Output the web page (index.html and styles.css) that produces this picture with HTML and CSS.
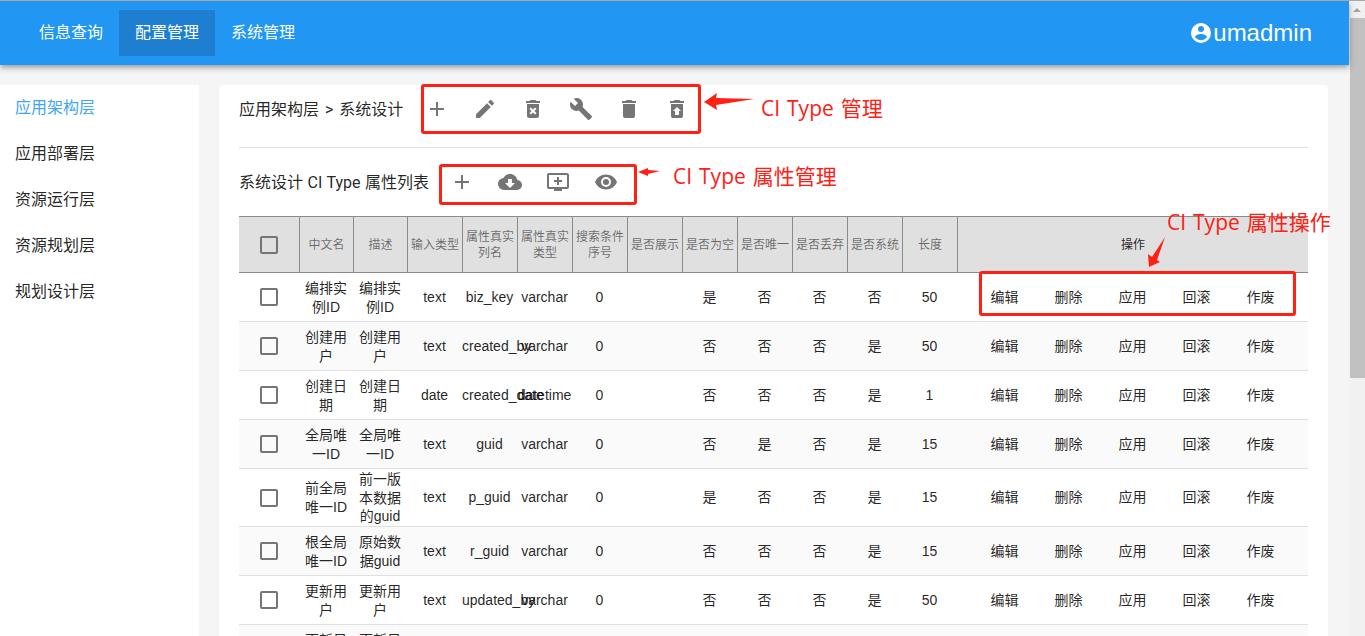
FILE: index.html
```html
<!DOCTYPE html>
<html lang="zh-CN">
<head>
<meta charset="utf-8">
<title>配置管理</title>
<link rel="stylesheet" href="styles.css">
</head>
<body>
<div class="app">
  <div class="page">
    <header class="topbar">
      <nav class="nav">
        <a class="nav-item">信息查询</a>
        <a class="nav-item nav-active">配置管理</a>
        <a class="nav-item">系统管理</a>
      </nav>
      <div class="user">
        <svg class="icon" viewBox="0 0 24 24"><path d="M12,19.2C9.5,19.2 7.29,17.92 6,16C6.03,14 10,12.9 12,12.9C14,12.9 17.97,14 18,16C16.71,17.92 14.5,19.2 12,19.2M12,5A3,3 0 0,1 15,8A3,3 0 0,1 12,11A3,3 0 0,1 9,8A3,3 0 0,1 12,5M12,2A10,10 0 0,0 2,12A10,10 0 0,0 12,22A10,10 0 0,0 22,12A10,10 0 0,0 12,2Z"/></svg>
        <span>umadmin</span>
      </div>
    </header>
    <div class="content">
      <aside class="sidebar">
        <a class="side-item side-active">应用架构层</a>
        <a class="side-item">应用部署层</a>
        <a class="side-item">资源运行层</a>
        <a class="side-item">资源规划层</a>
        <a class="side-item">规划设计层</a>
      </aside>
      <main class="card">
        <div class="toolbar toolbar-top">
          <span class="crumb crumb-top">应用架构层 &gt; 系统设计</span>
          <div class="icons icons-top">
            <button class="icon-btn"><svg class="icon" viewBox="0 0 24 24"><path d="M19,13H13V19H11V13H5V11H11V5H13V11H19V13Z"/></svg></button>
            <button class="icon-btn"><svg class="icon" viewBox="0 0 24 24"><path d="M20.71,7.04C21.1,6.65 21.1,6 20.71,5.63L18.37,3.29C18,2.9 17.35,2.9 16.96,3.29L15.12,5.12L18.87,8.87M3,17.25V21H6.75L17.81,9.93L14.06,6.18L3,17.25Z"/></svg></button>
            <button class="icon-btn"><svg class="icon" viewBox="0 0 24 24"><path d="M6,19A2,2 0 0,0 8,21H16A2,2 0 0,0 18,19V7H6V19M8.46,11.88L9.87,10.47L12,12.59L14.12,10.47L15.53,11.88L13.41,14L15.53,16.12L14.12,17.53L12,15.41L9.88,17.53L8.47,16.12L10.59,14L8.46,11.88M15.5,4L14.5,3H9.5L8.5,4H5V6H19V4H15.5Z"/></svg></button>
            <button class="icon-btn"><svg class="icon" viewBox="0 0 24 24"><path d="M22.7,19L13.6,9.9C14.5,7.6 14,4.9 12.1,3C10.1,1 7.1,0.6 4.7,1.7L9,6L6,9L1.6,4.7C0.4,7.1 0.9,10.1 2.9,12.1C4.8,14 7.5,14.5 9.8,13.6L18.9,22.7C19.3,23.1 19.9,23.1 20.3,22.7L22.6,20.4C23.1,20 23.1,19.3 22.7,19Z"/></svg></button>
            <button class="icon-btn"><svg class="icon" viewBox="0 0 24 24"><path d="M19,4H15.5L14.5,3H9.5L8.5,4H5V6H19V4H15.5ZM6,19A2,2 0 0,0 8,21H16A2,2 0 0,0 18,19V7H6V19Z"/></svg></button>
            <button class="icon-btn"><svg class="icon" viewBox="0 0 24 24"><path d="M14,14H16L12,10L8,14H10V18H14V14M6,7H18V19C18,19.5 17.8,20 17.39,20.39C17,20.8 16.5,21 16,21H8C7.5,21 7,20.8 6.61,20.39C6.2,20 6,19.5 6,19V7M19,4V6H5V4H8.5L9.5,3H14.5L15.5,4H19Z"/></svg></button>
          </div>
        </div>
        <div class="toolbar toolbar-sub">
          <span class="crumb crumb-sub">系统设计 CI Type 属性列表</span>
          <div class="icons icons-sub">
            <button class="icon-btn"><svg class="icon" viewBox="0 0 24 24"><path d="M19,13H13V19H11V13H5V11H11V5H13V11H19V13Z"/></svg></button>
            <button class="icon-btn"><svg class="icon" viewBox="0 0 24 24"><path d="M17,13L12,18L7,13H10V9H14V13M19.35,10.03C18.67,6.59 15.64,4 12,4C9.11,4 6.6,5.64 5.35,8.03C2.34,8.36 0,10.9 0,14A6,6 0 0,0 6,20H19A5,5 0 0,0 24,15C24,12.36 21.95,10.22 19.35,10.03Z"/></svg></button>
            <button class="icon-btn"><svg class="icon" viewBox="0 0 24 24"><path d="M21 3H3c-1.11 0-2 .89-2 2v12c0 1.1.89 2 2 2h5v2h8v-2h5c1.1 0 1.99-.9 1.99-2L23 5c0-1.11-.9-2-2-2zm0 14H3V5h18v12zm-5-7v2h-3v3h-2v-3H8v-2h3V7h2v3h3z"/></svg></button>
            <button class="icon-btn"><svg class="icon" viewBox="0 0 24 24"><path d="M12,9A3,3 0 0,0 9,12A3,3 0 0,0 12,15A3,3 0 0,0 15,12A3,3 0 0,0 12,9M12,17A5,5 0 0,1 7,12A5,5 0 0,1 12,7A5,5 0 0,1 17,12A5,5 0 0,1 12,17M12,4.5C7,4.5 2.73,7.61 1,12C2.73,16.39 7,19.5 12,19.5C17,19.5 21.27,16.39 23,12C21.27,7.61 17,4.5 12,4.5Z"/></svg></button>
          </div>
        </div>
        <table class="grid">
          <colgroup>
            <col class="c-check"><col class="c-54"><col class="c-54"><col class="c-55"><col class="c-55"><col class="c-55"><col class="c-55"><col class="c-55"><col class="c-55"><col class="c-55"><col class="c-55"><col class="c-55"><col class="c-55"><col>
          </colgroup>
          <thead>
            <tr>
              <th><span class="check"></span></th><th>中文名</th><th>描述</th><th>输入类型</th><th>属性真实列名</th><th>属性真实类型</th><th>搜索条件序号</th><th>是否展示</th><th>是否为空</th><th>是否唯一</th><th>是否丢弃</th><th>是否系统</th><th>长度</th><th class="th-ops">操作</th>
            </tr>
          </thead>
          <tbody>
            <tr><td><span class="check"></span></td><td>编排实例ID</td><td>编排实例ID</td><td>text</td><td class="nowrap">biz_key</td><td class="nowrap">varchar</td><td>0</td><td></td><td>是</td><td>否</td><td>否</td><td>否</td><td>50</td><td><div class="ops"><a>编辑</a><a>删除</a><a>应用</a><a>回滚</a><a>作废</a></div></td></tr>
            <tr><td><span class="check"></span></td><td>创建用户</td><td>创建用户</td><td>text</td><td class="nowrap">created_by</td><td class="nowrap">varchar</td><td>0</td><td></td><td>否</td><td>否</td><td>否</td><td>是</td><td>50</td><td><div class="ops"><a>编辑</a><a>删除</a><a>应用</a><a>回滚</a><a>作废</a></div></td></tr>
            <tr><td><span class="check"></span></td><td>创建日期</td><td>创建日期</td><td>date</td><td class="nowrap">created_date</td><td class="nowrap">datetime</td><td>0</td><td></td><td>否</td><td>否</td><td>否</td><td>是</td><td>1</td><td><div class="ops"><a>编辑</a><a>删除</a><a>应用</a><a>回滚</a><a>作废</a></div></td></tr>
            <tr><td><span class="check"></span></td><td>全局唯一ID</td><td>全局唯一ID</td><td>text</td><td class="nowrap">guid</td><td class="nowrap">varchar</td><td>0</td><td></td><td>否</td><td>是</td><td>否</td><td>是</td><td>15</td><td><div class="ops"><a>编辑</a><a>删除</a><a>应用</a><a>回滚</a><a>作废</a></div></td></tr>
            <tr><td><span class="check"></span></td><td>前全局唯一ID</td><td>前一版本数据的guid</td><td>text</td><td class="nowrap">p_guid</td><td class="nowrap">varchar</td><td>0</td><td></td><td>是</td><td>否</td><td>否</td><td>是</td><td>15</td><td><div class="ops"><a>编辑</a><a>删除</a><a>应用</a><a>回滚</a><a>作废</a></div></td></tr>
            <tr><td><span class="check"></span></td><td>根全局唯一ID</td><td>原始数据guid</td><td>text</td><td class="nowrap">r_guid</td><td class="nowrap">varchar</td><td>0</td><td></td><td>否</td><td>否</td><td>否</td><td>是</td><td>15</td><td><div class="ops"><a>编辑</a><a>删除</a><a>应用</a><a>回滚</a><a>作废</a></div></td></tr>
            <tr><td><span class="check"></span></td><td>更新用户</td><td>更新用户</td><td>text</td><td class="nowrap">updated_by</td><td class="nowrap">varchar</td><td>0</td><td></td><td>否</td><td>否</td><td>否</td><td>是</td><td>50</td><td><div class="ops"><a>编辑</a><a>删除</a><a>应用</a><a>回滚</a><a>作废</a></div></td></tr>
            <tr><td><span class="check"></span></td><td>更新日期</td><td>更新日期</td><td>date</td><td class="nowrap">updated_date</td><td class="nowrap">datetime</td><td>0</td><td></td><td>否</td><td>否</td><td>否</td><td>是</td><td>1</td><td><div class="ops"><a>编辑</a><a>删除</a><a>应用</a><a>回滚</a><a>作废</a></div></td></tr>
          </tbody>
        </table>
      </main>
    </div>
  </div>
  <div class="scrollbar">
    <div class="scroll-up"></div>
    <div class="scroll-thumb"></div>
  </div>

  <div class="mark mark-a"></div>
  <div class="mark mark-b"></div>
  <div class="mark mark-c"></div>
  <svg class="arrows" viewBox="0 0 1365 636">
    <polygon points="704,102 717,93 716,98 754,99 716,105 717,110"/>
    <polygon points="638,172 648,168 648,170 660,171 648,174 648,176"/>
    <polygon points="1149,267 1148,254 1152,257 1165,237 1157,260 1160,262"/>
  </svg>
  <div class="note note-a">CI Type 管理</div>
  <div class="note note-b">CI Type 属性管理</div>
  <div class="note note-c">CI Type 属性操作</div>
</div>
</body>
</html>
```

FILE: styles.css
```css
* { box-sizing: border-box; }
html, body { margin: 0; padding: 0; height: 100%; overflow: hidden; }
body {
  font-family: "Liberation Sans", "Noto Sans CJK SC", sans-serif;
  font-size: 14px;
  color: rgba(0, 0, 0, 0.87);
  background: #f5f5f5;
}
.app {
  position: relative;
  display: flex;
  height: 636px;
  border-top: 1px solid #a8a8a8;
  overflow: hidden;
}
.page { flex: 1; min-width: 0; display: flex; flex-direction: column; }

.topbar {
  flex: none;
  height: 64px;
  display: flex;
  align-items: center;
  justify-content: space-between;
  padding: 0 37px 0 23px;
  background: #2196f3;
  color: #fff;
  box-shadow: 0 2px 4px -1px rgba(0,0,0,.2), 0 4px 5px 0 rgba(0,0,0,.14), 0 1px 10px 0 rgba(0,0,0,.12);
  position: relative;
  z-index: 1;
}
.nav { display: flex; }
.nav-item {
  width: 96px;
  height: 46px;
  line-height: 46px;
  text-align: center;
  font-size: 16px;
}
.nav-active { background: #1e7fd0; }
.user { display: flex; align-items: center; font-size: 24px; line-height: 32px; }
.user .icon { fill: #fff; }

.icon { display: block; width: 24px; height: 24px; fill: #757575; }

.content { flex: 1; min-height: 0; display: flex; gap: 20px; padding: 20px 21px 0 0; overflow: hidden; }
.sidebar { flex: none; width: 199px; background: #fff; }
.side-item { display: block; height: 46px; line-height: 46px; padding-left: 15px; font-size: 16px; }
.side-active { color: #42a5f5; }

.card { flex: 1; min-width: 0; padding: 0 20px; background: #fff; border-radius: 4px 4px 0 0; }
.toolbar { display: flex; align-items: center; height: 48px; }
.toolbar-top { box-sizing: content-box; padding-bottom: 14px; border-bottom: 1px solid #e0e0e0; }
.toolbar-sub { margin: 10px 0; }
.crumb {
  flex: none;
  font-family: Roboto, "Noto Sans CJK SC", sans-serif;
  font-size: 16px;
  line-height: 24px;
  color: rgba(0,0,0,.87);
  padding-top: 2px;
  white-space: nowrap;
}
.crumb-top { width: 164px; word-spacing: 2px; }
.crumb-sub { width: 190px; word-spacing: 0.5px; }
.icons { display: flex; }
.icons-top { margin-left: 10px; }
.icons-sub { margin-left: 9px; }
.icon-btn {
  width: 48px;
  height: 48px;
  padding: 0;
  border: 0;
  background: none;
  display: flex;
  align-items: center;
  justify-content: center;
}

.grid { width: 1069px; table-layout: fixed; border-collapse: separate; border-spacing: 0; }
.c-check { width: 60px; }
.c-54 { width: 54px; }
.c-55 { width: 55px; }
.grid th {
  height: 57px;
  padding: 0;
  font-size: 12px;
  font-weight: 400;
  line-height: 16px;
  text-align: center;
  color: rgba(0,0,0,.54);
  background: #e0e0e0;
  border-top: 1px solid #8a8a8a;
  border-bottom: 1px solid #8a8a8a;
  border-left: 1px solid #8a8a8a;
}
.grid th:first-child { border-left: 0; }
.grid th.th-ops { color: rgba(0,0,0,.87); }
.grid td {
  height: 49px;
  padding: 0;
  font-size: 14px;
  line-height: 19px;
  text-align: center;
  border-bottom: 1px solid #e0e0e0;
}
.grid td:nth-child(2), .grid td:nth-child(3) { padding-top: 1px; line-height: 18.67px; }
.grid tbody tr:nth-child(even) td { background: #fafafa; }
.nowrap { white-space: nowrap; }
.check {
  display: block;
  width: 18px;
  height: 18px;
  margin: 0 auto;
  border: 2px solid #757575;
  border-radius: 2px;
}
.ops { display: flex; justify-content: center; }
.ops a { width: 64px; text-align: center; }

.scrollbar { flex: none; width: 16px; background: #f1f1f1; position: relative; padding: 17px 0 0 1px; }
.scroll-up {
  position: absolute;
  left: 4px;
  top: 7px;
  width: 0;
  height: 0;
  border-left: 4px solid transparent;
  border-right: 4px solid transparent;
  border-bottom: 4px solid #a3a3a3;
}
.scroll-thumb { height: 360px; background: #c1c1c1; }

.mark { position: absolute; border: 3px solid #ff2015; border-radius: 3px; }
.mark-a { left: 421px; top: 83px; width: 280px; height: 50px; }
.mark-b { left: 439px; top: 163px; width: 198px; height: 41px; }
.mark-c { left: 979px; top: 270px; width: 317px; height: 45px; }
.arrows { position: absolute; left: 0; top: -1px; width: 1365px; height: 636px; fill: #ff2015; pointer-events: none; }
.note {
  position: absolute;
  font-size: 21px;
  line-height: 28px;
  color: #ff2015;
  white-space: nowrap;
  word-spacing: 1.5px;
  font-family: "Open Sans", "Noto Sans CJK SC", sans-serif;
}
.note-a { left: 761px; top: 93px; }
.note-b { left: 673px; top: 161px; }
.note-c { left: 1167px; top: 207px; }
```
